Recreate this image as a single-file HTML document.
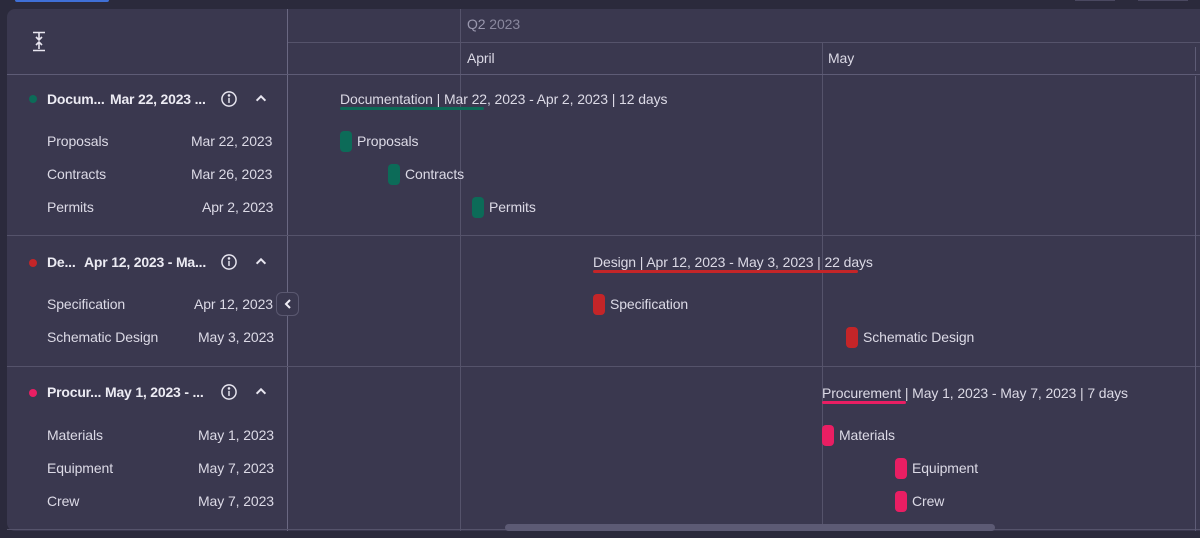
<!DOCTYPE html>
<html><head><meta charset="utf-8"><style>
*{margin:0;padding:0;box-sizing:border-box}
body{width:1200px;height:538px;overflow:hidden;background:#2b2a3c;font-family:"Liberation Sans",sans-serif;color:#e4e2ee;position:relative}
.abs{position:absolute}
.panel{left:7px;top:9px;width:1200px;height:522px;background:#3a384f;border-radius:8px 0 0 8px}
.t{position:absolute;font-size:14px;white-space:nowrap;color:#dcdae6;letter-spacing:-0.1px}
.b{font-weight:bold;color:#ecebf3;letter-spacing:-0.2px}
.hl{position:absolute;height:1px;background:#55536b}
.vl{position:absolute;width:1px;background:#55536b}
.bar{position:absolute;width:12px;height:21px;border-radius:4px}
.g{background:#0c6b58}.r{background:#c42528}.p{background:#e91e63}
.dot{position:absolute;width:8px;height:8px;border-radius:50%}
.ul{position:absolute;height:3px;border-radius:2px}
</style></head><body>
<div class="abs" style="left:15px;top:0;width:94px;height:2px;background:#3f6fd6;border-radius:0 0 3px 3px"></div>
<div class="abs" style="left:1075px;top:0;width:40px;height:1px;background:#4a4860"></div>
<div class="abs" style="left:1138px;top:0;width:50px;height:1px;background:#4a4860"></div>
<div class="abs panel"></div>
<div class="vl" style="left:287px;top:9px;height:522px;background:#6a6882"></div>
<div class="vl" style="left:460px;top:9px;height:522px"></div>
<div class="vl" style="left:822px;top:42px;height:489px"></div>
<div class="hl" style="left:288px;top:42px;width:912px"></div>
<div class="hl" style="left:7px;top:74px;width:1193px;background:#5e5c76"></div>
<div class="hl" style="left:7px;top:235px;width:1193px"></div>
<div class="hl" style="left:7px;top:366px;width:1193px"></div>
<div class="hl" style="left:7px;top:529px;width:1193px"></div>
<div class="vl" style="left:1195px;top:47px;height:24px;background:#5e5c76"></div>
<div class="vl" style="left:1195px;top:76px;height:455px;background:#5e5c76"></div>
<svg class="abs" style="left:31px;top:31px" width="16" height="22" viewBox="0 0 16 22" fill="none" stroke="#e8e6f0" stroke-width="1.6"><path d="M2 1.5h12M8 2v7M5 6l3 3 3-3M5 14l3-3 3 3M8 11v7M2 19.5h12"/></svg>
<div class="t" style="left:467px;top:16px;color:#9a98ae">Q2 <span style="color:#8a889e">2023</span></div>
<div class="t" style="left:467px;top:50px">April</div>
<div class="t" style="left:828px;top:50px">May</div>
<div class="dot" style="left:29px;top:95px;background:#0c6b58"></div>
<div class="t b" style="left:47px;top:91px">Docum...</div>
<div class="t b" style="left:110px;top:91px">Mar 22, 2023 ...</div>
<svg class="abs" style="left:220px;top:90px" width="18" height="18" viewBox="0 0 16 16" fill="none" stroke="#e8e6f0" stroke-width="1.3"><circle cx="8" cy="8" r="6.3"/><path d="M8 7v4.5"/><circle cx="8" cy="4.8" r=".5" fill="#e8e6f0"/></svg>
<svg class="abs" style="left:254px;top:93px" width="14" height="11" viewBox="0 0 12 10" fill="none" stroke="#e8e6f0" stroke-width="1.8"><path d="M2 7l4-4 4 4"/></svg>
<div class="t" style="left:47px;top:133px">Proposals</div><div class="t" style="left:191px;top:133px">Mar 22, 2023</div>
<div class="t" style="left:47px;top:166px">Contracts</div><div class="t" style="left:191px;top:166px">Mar 26, 2023</div>
<div class="t" style="left:47px;top:199px">Permits</div><div class="t" style="left:202px;top:199px">Apr 2, 2023</div>
<div class="t" style="left:340px;top:91px">Documentation | Mar 22, 2023 - Apr 2, 2023 | 12 days</div>
<div class="ul g" style="left:340px;top:107px;width:144px"></div>
<div class="bar g" style="left:340px;top:131px"></div><div class="t" style="left:357px;top:133px">Proposals</div>
<div class="bar g" style="left:388px;top:164px"></div><div class="t" style="left:405px;top:166px">Contracts</div>
<div class="bar g" style="left:472px;top:197px"></div><div class="t" style="left:489px;top:199px">Permits</div>
<div class="dot" style="left:29px;top:259px;background:#c42528"></div>
<div class="t b" style="left:47px;top:254px">De...</div>
<div class="t b" style="left:84px;top:254px">Apr 12, 2023 - Ma...</div>
<svg class="abs" style="left:220px;top:253px" width="18" height="18" viewBox="0 0 16 16" fill="none" stroke="#e8e6f0" stroke-width="1.3"><circle cx="8" cy="8" r="6.3"/><path d="M8 7v4.5"/><circle cx="8" cy="4.8" r=".5" fill="#e8e6f0"/></svg>
<svg class="abs" style="left:254px;top:256px" width="14" height="11" viewBox="0 0 12 10" fill="none" stroke="#e8e6f0" stroke-width="1.8"><path d="M2 7l4-4 4 4"/></svg>
<div class="t" style="left:47px;top:296px">Specification</div><div class="t" style="left:194px;top:296px">Apr 12, 2023</div>
<div class="t" style="left:47px;top:329px">Schematic Design</div><div class="t" style="left:198px;top:329px">May 3, 2023</div>
<div class="abs" style="left:276px;top:292px;width:23px;height:24px;border:1px solid #5a5870;border-radius:6px;background:#3a384f"></div>
<svg class="abs" style="left:282px;top:297px" width="12" height="14" viewBox="0 0 12 14" fill="none" stroke="#f0eef6" stroke-width="2"><path d="M8 3l-4 4 4 4"/></svg>
<div class="t" style="left:593px;top:254px">Design | Apr 12, 2023 - May 3, 2023 | 22 days</div>
<div class="ul r" style="left:593px;top:270px;width:265px"></div>
<div class="bar r" style="left:593px;top:294px"></div><div class="t" style="left:610px;top:296px">Specification</div>
<div class="bar r" style="left:846px;top:327px"></div><div class="t" style="left:863px;top:329px">Schematic Design</div>
<div class="dot" style="left:29px;top:389px;background:#e91e63"></div>
<div class="t b" style="left:47px;top:384px">Procur...</div>
<div class="t b" style="left:105px;top:384px">May 1, 2023 - ...</div>
<svg class="abs" style="left:220px;top:383px" width="18" height="18" viewBox="0 0 16 16" fill="none" stroke="#e8e6f0" stroke-width="1.3"><circle cx="8" cy="8" r="6.3"/><path d="M8 7v4.5"/><circle cx="8" cy="4.8" r=".5" fill="#e8e6f0"/></svg>
<svg class="abs" style="left:254px;top:386px" width="14" height="11" viewBox="0 0 12 10" fill="none" stroke="#e8e6f0" stroke-width="1.8"><path d="M2 7l4-4 4 4"/></svg>
<div class="t" style="left:47px;top:427px">Materials</div><div class="t" style="left:198px;top:427px">May 1, 2023</div>
<div class="t" style="left:47px;top:460px">Equipment</div><div class="t" style="left:198px;top:460px">May 7, 2023</div>
<div class="t" style="left:47px;top:493px">Crew</div><div class="t" style="left:198px;top:493px">May 7, 2023</div>
<div class="t" style="left:822px;top:385px">Procurement | May 1, 2023 - May 7, 2023 | 7 days</div>
<div class="ul p" style="left:822px;top:401px;width:84px"></div>
<div class="bar p" style="left:822px;top:425px"></div><div class="t" style="left:839px;top:427px">Materials</div>
<div class="bar p" style="left:895px;top:458px"></div><div class="t" style="left:912px;top:460px">Equipment</div>
<div class="bar p" style="left:895px;top:491px"></div><div class="t" style="left:912px;top:493px">Crew</div>
<div class="abs" style="left:505px;top:524px;width:490px;height:7px;border-radius:4px;background:#5c5a74"></div>
</body></html>
